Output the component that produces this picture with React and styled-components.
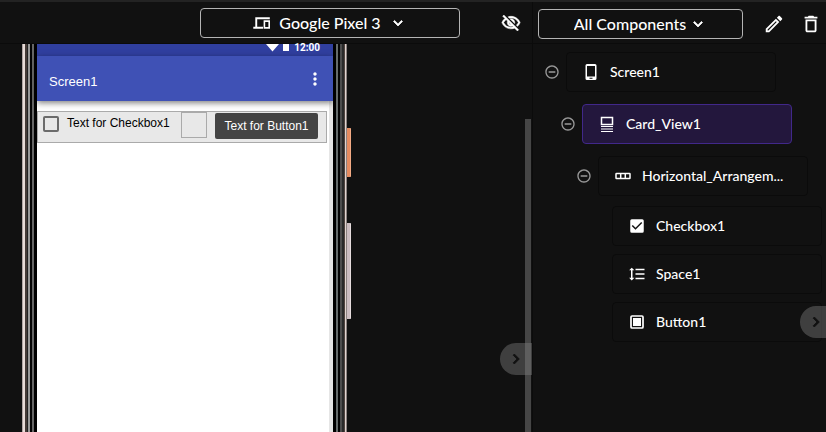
import styled, { createGlobalStyle } from "styled-components";
import {
  MdCheckBox,
  MdChevronRight,
  MdDeleteOutline,
  MdExpandMore,
  MdFormatLineSpacing,
  MdMoreVert,
  MdOutlineEdit,
  MdOutlineVisibilityOff,
  MdRemoveCircleOutline,
} from "react-icons/md";

const GlobalStyle = createGlobalStyle`
  :root {
    --bg-base: #111111;
    --text-color: #ffffff;
    --border-color: #b4b4b4;
    --line-color: #0b0b0b;
  }

  * {
    box-sizing: border-box;
  }

  body {
    margin: 0;
    background: var(--bg-base);
    color: var(--text-color);
    font-family: Lato, "Open Sans", sans-serif;
  }

  svg {
    flex-shrink: 0;
  }

  /* Icon bounding boxes stay invisible when an icon is stroked */
  svg path[fill="none"] {
    stroke: none;
  }
`;

const Page = styled.div`
  display: flex;
  height: 100vh;
  overflow: hidden;
  border-top: 2px solid #232323;
`;

const Viewer = styled.section`
  position: relative;
  display: flex;
  flex-direction: column;
  flex: 1;
  min-width: 0;
`;

const Sidebar = styled.aside`
  position: relative;
  flex: 0 0 294px;
  border-left: 1px solid var(--line-color);
`;

const Toolbar = styled.header`
  display: flex;
  align-items: center;
  flex-shrink: 0;
  height: 42px;
  border-bottom: 1px solid var(--line-color);
`;

const ViewerToolbar = styled(Toolbar)`
  justify-content: flex-end;
  gap: 41px;
  padding-right: 11px;
`;

const SidebarToolbar = styled(Toolbar)`
  justify-content: space-between;
  padding: 2px 4px 0 5px;
`;

const Actions = styled.div`
  display: flex;
  gap: 15px;
`;

const SelectBox = styled.label`
  display: flex;
  align-items: center;
  justify-content: center;
  gap: ${({ $gap }) => $gap}px;
  width: ${({ $width }) => $width}px;
  height: 30px;
  border: 1px solid var(--border-color);
  border-radius: 4px;
`;

const Select = styled.select`
  appearance: none;
  field-sizing: content;
  padding: 0;
  border: none;
  outline: none;
  background: transparent;
  color: inherit;
  font: 500 16px Lato, sans-serif;
  line-height: 24px;
`;

const IconButton = styled.button`
  display: flex;
  padding: 0;
  border: none;
  background: transparent;
  color: ${({ $muted }) => ($muted ? "#999999" : "inherit")};
  cursor: pointer;
`;

const Chevron = styled(MdExpandMore)`
  stroke: currentColor;
  stroke-width: 1;
`;

const HiddenIcon = styled(MdOutlineVisibilityOff)`
  stroke: currentColor;
  stroke-width: 0.6;
`;

const Stage = styled.div`
  display: flex;
  justify-content: space-between;
  flex: 1;
  min-height: 0;
  padding-left: 22px;
`;

const Scrollbar = styled.div`
  width: 6px;
  margin: 75px 1px 0 0;
  background: #464646;
`;

const Phone = styled.div`
  display: flex;
`;

const LeftBezel = styled.div`
  width: 15px;
  background: linear-gradient(
    to right,
    #b0a6a4 0 1px,
    #e8dcd8 1px 3px,
    #463c38 3px 5px,
    #222222 5px 6px,
    #999999 6px 8px,
    #050505 8px 10px,
    #666666 10px 12px,
    #000000 12px
  );
`;

const RightBezel = styled.div`
  width: 14px;
  background: linear-gradient(
    to right,
    #000000 0 3px,
    #666c6c 3px 5px,
    #050505 5px 7px,
    #4d4d4d 7px 9px,
    #2a2a2a 9px 11px,
    #51443f 11px 12px,
    #e0d4d0 12px 13px,
    #8c8280 13px
  );
`;

const SideKeys = styled.div`
  display: flex;
  flex-direction: column;
  gap: 46px;
  width: 4px;
  padding-top: 84px;
`;

const SideKey = styled.div`
  height: ${({ $height }) => $height}px;
  border-right: 1px solid ${({ $edge }) => $edge};
  border-radius: 0 1px 1px 0;
  background: ${({ $color }) => $color};
`;

const Screen = styled.div`
  width: 296px;
  border-right: 4px solid #e6e6e6;
  background: #ffffff;
  color: #000000;
  font-family: "Liberation Sans", Arial, sans-serif;
`;

// The bars run over the gutter on the right of the screen
const StatusBar = styled.div`
  display: flex;
  align-items: flex-end;
  justify-content: flex-end;
  gap: 4px;
  height: 12px;
  margin-right: -4px;
  padding-right: 13px;
  background: #303f9f;
  color: #ffffff;
  font: bold 10px Roboto, sans-serif;
  line-height: 10px;
`;

const Clock = styled.span`
  padding-bottom: 3px;
`;

const TitleBar = styled.div`
  display: flex;
  align-items: center;
  justify-content: space-between;
  height: 45px;
  margin-right: -4px;
  padding: 0 8px 0 12px;
  background: #3f51b5;
  box-shadow: 0 2px 6px rgba(0, 0, 0, 0.5);
  color: #ffffff;
`;

const AppTitle = styled.span`
  padding-top: 6px;
  font-size: 13px;
  line-height: 16px;
`;

const Arrangement = styled.div`
  display: flex;
  align-items: flex-start;
  width: 290px;
  height: 32px;
  margin-top: 10px;
  border: 1px solid #aaaaaa;
  background: #e8e8e8;
`;

const CheckLabel = styled.label`
  display: flex;
  align-items: flex-start;
  gap: 8px;
  flex: 1;
  padding: 4px 0 0 5px;
  font-size: 12px;
  line-height: 14px;
  white-space: nowrap;
`;

const CheckInput = styled.input`
  appearance: none;
  flex-shrink: 0;
  width: 16px;
  height: 16px;
  margin: 0;
  border: 2px solid #6b6b6b;
  border-radius: 2px;
`;

const SpaceBlock = styled.div`
  width: 26px;
  height: 26px;
  margin-right: 8px;
  border: 1px solid #aaaaaa;
`;

const AppButton = styled.button`
  width: 103px;
  height: 26px;
  margin: 1px 8px 0 0;
  padding: 0;
  border: none;
  border-radius: 2px;
  background: #444444;
  color: #ffffff;
  font: 12px "Liberation Sans", Arial, sans-serif;
  white-space: nowrap;
`;

const DrawerHandle = styled.button`
  position: absolute;
  right: 0;
  bottom: ${({ $bottom }) => $bottom}px;
  display: flex;
  align-items: center;
  justify-content: flex-end;
  width: ${({ $width }) => $width}px;
  height: 32px;
  padding: 0 ${({ $pad }) => $pad}px 0 0;
  border: none;
  border-radius: 16px 0 0 16px;
  background: rgba(128, 128, 128, 0.42);
  color: #111111;

  svg {
    stroke: currentColor;
    stroke-width: 1;
  }
`;

const Tree = styled.ul`
  margin: 0;
  padding: 8px 0 0 11px;
  list-style: none;
`;

const Branch = styled.ul`
  margin: 0;
  padding: 12px 0 0 16px;
  list-style: none;
`;

const Leaves = styled.ul`
  display: flex;
  flex-direction: column;
  gap: 8px;
  margin: 0;
  padding: 10px 0 0 36px;
  list-style: none;
`;

const Row = styled.div`
  display: flex;
  align-items: center;
  gap: 6px;
`;

const NodeButton = styled.button`
  display: flex;
  align-items: center;
  gap: 10px;
  width: 210px;
  height: 40px;
  padding: 0 15px;
  border: 1px solid ${({ $selected }) => ($selected ? "#41288a" : "var(--line-color)")};
  border-radius: 4px;
  background: ${({ $selected }) => ($selected ? "#23173d" : "transparent")};
  color: inherit;
  font: 500 14px Lato, sans-serif;
  line-height: 20px;
  text-align: left;
`;

const NodeName = styled.span`
  min-width: 0;
  white-space: nowrap;
`;

function DevicesIcon() {
  return (
    <svg width="18" height="18" viewBox="0 0 18 18" fill="none">
      <g fill="currentColor">
        <path d="M2.300 3.300h14.500v1.900H4.200v7.600h5.800v1.900H.3v-1.900h2z" />
        <path fillRule="evenodd" d="M10.600 6.300h6.400v8.400h-6.400zM12.200 8v5h3.200V8z" />
      </g>
    </svg>
  );
}

function PhoneIcon() {
  return (
    <svg width="18" height="18" viewBox="0 0 18 18" fill="currentColor">
      <path
        fillRule="evenodd"
        d="M5 1h8a1.500 1.500 0 0 1 1.500 1.500v13a1.500 1.500 0 0 1-1.500 1.500H5a1.500 1.500 0 0 1-1.500-1.500v-13A1.500 1.500 0 0 1 5 1zM5 3v10.500h8V3zM7.500 14.700v1h3v-1z"
      />
    </svg>
  );
}

function CardIcon() {
  return (
    <svg width="18" height="18" viewBox="0 0 18 18" fill="none" stroke="currentColor">
      <path strokeWidth="1.500" d="M3.500 2.500h11v7h-11z" />
      <path strokeWidth="1.200" d="M3 11.500h12M3 14h12M3 16.500h12" />
    </svg>
  );
}

function HorizontalIcon() {
  return (
    <svg width="18" height="18" viewBox="0 0 18 18" fill="none" stroke="currentColor" strokeWidth="1.500">
      <rect x="2" y="6.500" width="14" height="5" rx="0.500" />
      <path d="M6.700 6.500v5M11.300 6.500v5" />
    </svg>
  );
}

function ButtonIcon() {
  return (
    <svg width="18" height="18" viewBox="0 0 18 18">
      <rect x="3" y="3" width="12" height="12" rx="1" fill="none" stroke="currentColor" strokeWidth="1.700" />
      <rect x="5" y="5" width="8" height="8" fill="currentColor" />
    </svg>
  );
}

function StatusIcons() {
  return (
    <svg width="24" height="12" viewBox="0 0 24 12" fill="currentColor">
      <path d="M0 0h13L6.500 7.500zM17 0h6v7h-6z" />
    </svg>
  );
}

function TreeRow({ icon, name, selected }) {
  return (
    <Row>
      <IconButton $muted aria-label={`Collapse ${name}`}>
        <MdRemoveCircleOutline size={16} />
      </IconButton>
      <NodeButton $selected={selected}>
        {icon}
        <NodeName>{name}</NodeName>
      </NodeButton>
    </Row>
  );
}

const leaves = [
  { name: "Checkbox1", icon: <MdCheckBox size={18} /> },
  { name: "Space1", icon: <MdFormatLineSpacing size={18} /> },
  { name: "Button1", icon: <ButtonIcon /> },
];

export default function App() {
  return (
    <Page>
      <GlobalStyle />
      <Viewer>
        <ViewerToolbar>
          <SelectBox $width={260} $gap={8}>
            <DevicesIcon />
            <Select aria-label="Device">
              <option>Google Pixel 3</option>
            </Select>
            <Chevron size={18} />
          </SelectBox>
          <IconButton aria-label="Hidden components">
            <HiddenIcon size={20} />
          </IconButton>
        </ViewerToolbar>
        <Stage>
          <Phone>
            <LeftBezel />
            <Screen>
              <StatusBar>
                <StatusIcons />
                <Clock>12:00</Clock>
              </StatusBar>
              <TitleBar>
                <AppTitle>Screen1</AppTitle>
                <MdMoreVert size={20} />
              </TitleBar>
              <Arrangement>
                <CheckLabel>
                  <CheckInput type="checkbox" />
                  Text for Checkbox1
                </CheckLabel>
                <SpaceBlock />
                <AppButton>Text for Button1</AppButton>
              </Arrangement>
            </Screen>
            <RightBezel />
            <SideKeys>
              <SideKey $height={49} $color="#e58b60" $edge="#f3ab85" />
              <SideKey $height={96} $color="#cbbcc0" $edge="#e6dcdd" />
            </SideKeys>
          </Phone>
          <Scrollbar />
        </Stage>
        <DrawerHandle $bottom={57} $width={32} $pad={6} aria-label="Close viewer">
          <MdChevronRight size={20} />
        </DrawerHandle>
      </Viewer>

      <Sidebar>
        <SidebarToolbar>
          <SelectBox $width={205} $gap={3}>
            <Select aria-label="Component filter">
              <option>All Components</option>
            </Select>
            <Chevron size={18} />
          </SelectBox>
          <Actions>
            <IconButton aria-label="Rename">
              <MdOutlineEdit size={22} />
            </IconButton>
            <IconButton aria-label="Delete">
              <MdDeleteOutline size={22} />
            </IconButton>
          </Actions>
        </SidebarToolbar>
        <Tree>
          <li>
            <TreeRow name="Screen1" icon={<PhoneIcon />} />
            <Branch>
              <li>
                <TreeRow name="Card_View1" icon={<CardIcon />} selected />
                <Branch>
                  <li>
                    <TreeRow name="Horizontal_Arrangem..." icon={<HorizontalIcon />} />
                    <Leaves>
                      {leaves.map((leaf) => (
                        <li key={leaf.name}>
                          <NodeButton>
                            {leaf.icon}
                            <NodeName>{leaf.name}</NodeName>
                          </NodeButton>
                        </li>
                      ))}
                    </Leaves>
                  </li>
                </Branch>
              </li>
            </Branch>
          </li>
        </Tree>
        <DrawerHandle $bottom={94} $width={26} $pad={0} aria-label="Close components">
          <MdChevronRight size={20} />
        </DrawerHandle>
      </Sidebar>
    </Page>
  );
}
